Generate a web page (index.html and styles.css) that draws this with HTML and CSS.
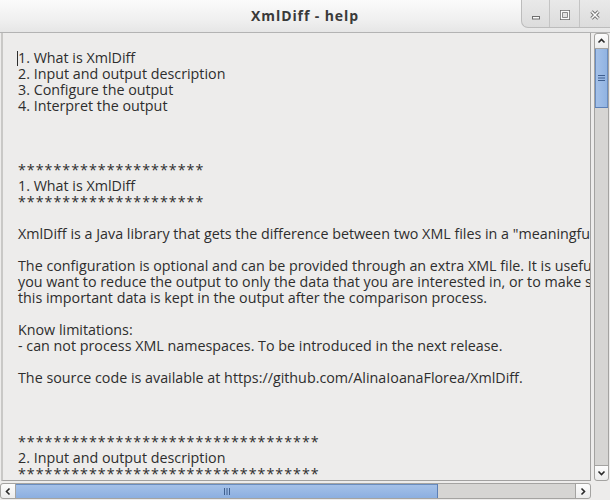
FILE: index.html
```html
<!DOCTYPE html>
<html>
<head>
<meta charset="utf-8">
<title>XmlDiff - help</title>
<link rel="stylesheet" href="styles.css">
</head>
<body>
<div class="window">
  <header class="titlebar">
    <div class="spacer"></div>
    <div class="title">XmlDiff - help</div>
    <div class="controls">
      <div class="ctl ctl-min"><svg width="12" height="12" viewBox="0 0 12 12"><rect x="2.5" y="7.5" width="7" height="2.5" fill="#fdfdfd" stroke="#6e6e6e" stroke-width="1"/></svg></div>
      <div class="ctl ctl-max"><svg width="12" height="12" viewBox="0 0 12 12"><rect x="2.5" y="2.5" width="7" height="7" fill="none" stroke="#6e6e6e" stroke-width="3"/><rect x="2.5" y="2.5" width="7" height="7" fill="none" stroke="#fdfdfd" stroke-width="1.4"/></svg></div>
      <div class="ctl ctl-close"><svg width="12" height="12" viewBox="0 0 12 12"><path d="M2.5 2.5 L9.5 9.5 M9.5 2.5 L2.5 9.5" stroke="#6e6e6e" stroke-width="3.2"/><path d="M2.5 2.5 L9.5 9.5 M9.5 2.5 L2.5 9.5" stroke="#fdfdfd" stroke-width="1.5"/></svg></div>
    </div>
  </header>
  <div class="client">
    <div class="view-row">
      <div class="textview">
<pre class="text"><span class="caret"></span>1. What is XmlDiff
2. Input and output description
3. Configure the output
4. Interpret the output



<span class="stars">*********************</span>
1. What is XmlDiff
<span class="stars">*********************</span>

XmlDiff is a Java library that gets the difference between two XML files in a "meaningful" way.

The configuration is optional and can be provided through an extra XML file. It is useful when
you want to reduce the output to only the data that you are interested in, or to make sure that
this important data is kept in the output after the comparison process.

Know limitations:
- can not process XML namespaces. To be introduced in the next release.

The source code is available at https://github.com/AlinaIoanaFlorea/XmlDiff.



<span class="stars">**********************************</span>
2. Input and output description
<span class="stars">**********************************</span>
</pre>
      </div>
      <div class="vscroll">
        <div class="sb-btn sb-up"><svg width="9" height="6" viewBox="0 0 9 6"><path d="M1.5 4.5 L4.5 1.5 L7.5 4.5" fill="none" stroke="#2a2a2a" stroke-width="1.6"/></svg></div>
        <div class="vthumb"><svg width="7" height="8" viewBox="0 0 7 8"><path d="M0 1.5 H7 M0 4 H7 M0 6.5 H7" stroke="#3f5f8f" stroke-width="1"/></svg></div>
        <div class="vtrack"></div>
        <div class="sb-btn sb-down"><svg width="9" height="6" viewBox="0 0 9 6"><path d="M1.5 1.5 L4.5 4.5 L7.5 1.5" fill="none" stroke="#2a2a2a" stroke-width="1.6"/></svg></div>
      </div>
    </div>
    <div class="hrow">
      <div class="hscroll">
        <div class="sb-btn sb-left"><svg width="6" height="9" viewBox="0 0 6 9"><path d="M4.5 1.5 L1.5 4.5 L4.5 7.5" fill="none" stroke="#2a2a2a" stroke-width="1.6"/></svg></div>
        <div class="hthumb"><svg width="8" height="7" viewBox="0 0 8 7"><path d="M1.5 0 V7 M4 0 V7 M6.5 0 V7" stroke="#3f5f8f" stroke-width="1"/></svg></div>
        <div class="htrack"></div>
        <div class="sb-btn sb-right"><svg width="6" height="9" viewBox="0 0 6 9"><path d="M1.5 1.5 L4.5 4.5 L1.5 7.5" fill="none" stroke="#2a2a2a" stroke-width="1.6"/></svg></div>
      </div>
      <div class="corner"></div>
    </div>
  </div>
</div>
</body>
</html>
```

FILE: styles.css
```css
html, body {
  margin: 0;
  padding: 0;
  width: 610px;
  height: 500px;
  overflow: hidden;
  background: #edeceb;
}

.window {
  width: 610px;
  height: 500px;
  display: flex;
  flex-direction: column;
  background: #edeceb;
  font-family: "Open Sans", "DejaVu Sans", sans-serif;
}

.titlebar {
  height: 32px;
  flex: none;
  display: grid;
  grid-template-columns: 1fr auto 1fr;
  align-items: start;
  background: linear-gradient(#fbfbfb, #f0f0f0 60%, #e6e6e6);
  border-bottom: 1px solid #b3b3b3;
}

.title {
  padding-top: 6px;
  font-weight: 700;
  font-size: 14px;
  letter-spacing: 0.9px;
  color: #3a3a3a;
  line-height: 20px;
}

.controls {
  justify-self: end;
  display: flex;
  height: 27px;
  background: linear-gradient(#e9e9e9, #dcdcdc);
  border-left: 1px solid #bcbcbc;
  border-bottom: 1px solid #bcbcbc;
  border-bottom-left-radius: 7px;
}

.ctl {
  display: flex;
  align-items: center;
  justify-content: center;
  padding-top: 2px;
  box-sizing: border-box;
}

.ctl-min { width: 28px; border-right: 1px solid #c4c4c4; }
.ctl-max { width: 30px; border-right: 1px solid #c4c4c4; }
.ctl-close { width: 30px; }

.client {
  flex: 1;
  display: flex;
  flex-direction: column;
}

.view-row {
  display: flex;
  height: 448px;
  gap: 3px;
  padding-left: 1px;
  padding-right: 1px;
}

.textview {
  flex: 1;
  min-width: 0;
  overflow: hidden;
  background: #edeceb;
  border-left: 2px solid #c9c8c6;
  border-right: 1px solid #a2a1a0;
  border-bottom: 1px solid #a2a1a0;
  box-sizing: border-box;
}

.text {
  margin: 0;
  padding: 17px 0 0 15px;
  font-family: "Open Sans", "DejaVu Sans", sans-serif;
  font-size: 14.3px;
  line-height: 16px;
  color: #2e2e2e;
  white-space: pre;
}

.caret {
  display: inline-block;
  width: 0;
  height: 15px;
  border-left: 1px solid #2e2e2e;
  margin-left: -1px;
  vertical-align: -3px;
}

.stars {
  letter-spacing: 1px;
}

.vscroll {
  width: 15px;
  display: flex;
  flex-direction: column;
  background: #d6d5d3;
  border: 1px solid #a4a3a1;
  border-radius: 3px;
  box-sizing: border-box;
  height: 448px;
}

.sb-btn {
  display: flex;
  align-items: center;
  justify-content: center;
  background: linear-gradient(#fcfcfc, #ececec);
  flex: none;
}

.sb-up { height: 14px; border-bottom: 1px solid #a4a3a1; border-radius: 3px 3px 0 0; }
.sb-down { height: 14px; border-top: 1px solid #a4a3a1; border-radius: 0 0 3px 3px; }

.vthumb {
  height: 58px;
  flex: none;
  display: flex;
  align-items: center;
  justify-content: center;
  background: linear-gradient(90deg, #a6c2e9, #8fb2e1);
  border-bottom: 1px solid #5b7fb6;
  box-shadow: inset 1px 0 0 #6a8dc0, inset -1px 0 0 #6a8dc0;
}

.vtrack { flex: 1; }

.hrow {
  display: flex;
  margin-top: 2px;
  height: 16px;
}

.hscroll {
  width: 591px;
  display: flex;
  background: #d6d5d3;
  border: 1px solid #a4a3a1;
  border-radius: 3px;
  box-sizing: border-box;
}

.sb-left { width: 14px; border-right: 1px solid #a4a3a1; border-radius: 3px 0 0 3px; }
.sb-right { width: 14px; border-left: 1px solid #a4a3a1; border-radius: 0 3px 3px 0; }

.hthumb {
  width: 421px;
  flex: none;
  display: flex;
  align-items: center;
  justify-content: center;
  background: linear-gradient(#a6c2e9, #8cafe0);
  border-right: 1px solid #5b7fb6;
  box-shadow: inset 0 1px 0 #6a8dc0;
}

.htrack { flex: 1; }

.corner { flex: 1; }
```
